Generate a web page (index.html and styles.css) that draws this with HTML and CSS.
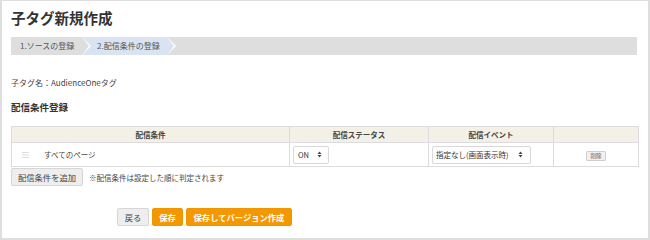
FILE: index.html
```html
<!DOCTYPE html>
<html lang="ja">
<head>
    <meta charset="UTF-8">
    <meta name="viewport" content="width=device-width, initial-scale=1.0">
    <title>子タグ新規作成</title>
    <link rel="stylesheet" href="styles.css">
</head>
<body>
    <div class="page">
        <h1 class="pageTitle">子タグ新規作成</h1>

        <div class="steps">
            <div class="step step1">1.ソースの登録</div>
            <div class="step step2 current">2.配信条件の登録</div>
        </div>

        <p class="tagName">子タグ名：AudienceOneタグ</p>
        <h2 class="sectionTitle">配信条件登録</h2>

        <table class="condTable">
            <colgroup>
                <col class="colCond">
                <col class="colStatus">
                <col class="colEvent">
                <col class="colDel">
            </colgroup>
            <thead>
                <tr>
                    <th>配信条件</th>
                    <th>配信ステータス</th>
                    <th>配信イベント</th>
                    <th></th>
                </tr>
            </thead>
            <tbody>
                <tr>
                    <td>
                        <div class="condCell">
                            <svg class="handle" width="7" height="6" viewBox="0 0 7 6">
                                <rect x="0" y="0" width="7" height="1" fill="#dcdcdc"/>
                                <rect x="0" y="2.5" width="7" height="1" fill="#dcdcdc"/>
                                <rect x="0" y="5" width="7" height="1" fill="#dcdcdc"/>
                            </svg>
                            <span>すべてのページ</span>
                        </div>
                    </td>
                    <td class="selCell">
                        <div class="select selOn">
                            <span>ON</span>
                            <svg class="arrows" width="5" height="7" viewBox="0 0 5 7">
                                <path d="M0.5 3 L2.5 0.5 L4.5 3 Z" fill="#444"/>
                                <path d="M0.5 4 L2.5 6.5 L4.5 4 Z" fill="#444"/>
                            </svg>
                        </div>
                    </td>
                    <td class="selCell">
                        <div class="select selEvent">
                            <span>指定なし(画面表示時)</span>
                            <svg class="arrows" width="5" height="7" viewBox="0 0 5 7">
                                <path d="M0.5 3 L2.5 0.5 L4.5 3 Z" fill="#444"/>
                                <path d="M0.5 4 L2.5 6.5 L4.5 4 Z" fill="#444"/>
                            </svg>
                        </div>
                    </td>
                    <td class="delCell">
                        <button class="btnDel">削除</button>
                    </td>
                </tr>
            </tbody>
        </table>

        <div class="addRow">
            <button class="btnGray btnAdd">配信条件を追加</button>
            <span class="note">※配信条件は設定した順に判定されます</span>
        </div>

        <div class="actions">
            <button class="btnGray btnBack">戻る</button>
            <button class="btnOrange btnSave">保存</button>
            <button class="btnOrange btnVersion">保存してバージョン作成</button>
        </div>
    </div>
</body>
</html>
```

FILE: styles.css
```css
* {
    box-sizing: border-box;
}

body {
    margin: 0;
    background-color: #fff;
    font-family: "Noto Sans CJK JP", "Noto Sans", sans-serif;
    color: #333;
}

.page {
    width: 650px;
    height: 240px;
    border: 2px solid #dedede;
    border-top-width: 1px;
    padding: 8px 11px 0 9px;
}

.pageTitle {
    margin: 0;
    font-size: 14.5px;
    line-height: 18px;
    font-weight: bold;
    color: #333;
}

/* ---------- steps ---------- */

.steps {
    display: flex;
    height: 18px;
    margin-top: 10px;
    background-color: #dedede;
}

.step {
    position: relative;
    height: 18px;
    line-height: 18px;
    font-size: 8px;
    color: #555;
    background-color: #dedede;
}

.step1 {
    width: 71px;
    padding-left: 9px;
}

.step2 {
    width: 85px;
    padding-left: 15px;
}

.step.current {
    background-color: #dae3f1;
}

.step::before,
.step::after {
    content: "";
    position: absolute;
    top: 0;
    width: 0;
    height: 0;
    border-top: 9px solid transparent;
    border-bottom: 9px solid transparent;
}

.step::before {
    right: -9px;
    border-left: 9px solid #fff;
    z-index: 1;
}

.step::after {
    right: -7px;
    border-left: 7px solid #dedede;
    z-index: 2;
}

.step.current::after {
    border-left-color: #dae3f1;
}

/* ---------- info ---------- */

.tagName {
    margin: 22px 0 0;
    font-size: 8px;
    line-height: 12px;
    color: #444;
}

.sectionTitle {
    margin: 12px 0 0;
    font-size: 9.5px;
    line-height: 12px;
    font-weight: bold;
    color: #333;
}

/* ---------- table ---------- */

.condTable {
    width: 627px;
    margin-top: 13px;
    border-collapse: collapse;
    table-layout: fixed;
    font-size: 7.5px;
}

.colCond { width: 278px; }
.colStatus { width: 139px; }
.colEvent { width: 125px; }
.colDel { width: 85px; }

.condTable th,
.condTable td {
    border: 1px solid #dcdcdc;
    padding: 0;
}

.condTable th {
    height: 16px;
    background-color: #f3f0e8;
    font-weight: bold;
    color: #444;
    text-align: center;
}

.condTable td {
    height: 24px;
    vertical-align: middle;
    color: #444;
}

.condCell {
    display: flex;
    align-items: center;
    gap: 15px;
    padding-left: 10px;
}

.condTable td.selCell {
    padding-left: 3px;
}

.select {
    display: flex;
    align-items: center;
    justify-content: space-between;
    height: 18px;
    border: 1px solid #d8d8d8;
    border-radius: 2px;
    background-color: #fff;
    font-size: 7.5px;
    color: #333;
}

.selOn {
    width: 36px;
    padding: 0 6px 0 4px;
}

.selEvent {
    width: 99px;
    padding: 0 7px 0 3px;
}

.delCell {
    text-align: center;
}

.btnDel {
    width: 20px;
    height: 10px;
    padding: 0;
    border: 1px solid #cfcfcf;
    border-radius: 1px;
    background-color: #f0f0f0;
    font-family: inherit;
    font-size: 5.5px;
    line-height: 8px;
    color: #555;
}

/* ---------- buttons ---------- */

button {
    font-family: "Noto Sans CJK JP", "Noto Sans", sans-serif;
    cursor: pointer;
}

.btnGray {
    height: 18px;
    padding: 0 6px;
    border: 1px solid #d6d6d6;
    border-radius: 2px;
    background-color: #eee;
    font-size: 8.3px;
    line-height: 16px;
    color: #444;
}

.addRow {
    display: flex;
    align-items: center;
    gap: 6px;
    margin-top: 1px;
}

.btnAdd {
    width: 72px;
    padding: 0;
}

.note {
    font-size: 7.5px;
    color: #444;
}

.actions {
    display: flex;
    gap: 3px;
    margin: 22px 0 0 106px;
}

.btnBack {
    width: 32px;
    padding: 0;
}

.btnOrange {
    height: 18px;
    padding: 0;
    border: 1px solid #f29600;
    border-radius: 2px;
    background-color: #f39800;
    font-size: 8.3px;
    font-weight: bold;
    line-height: 16px;
    color: #fff;
}

.btnSave {
    width: 31px;
}

.btnVersion {
    width: 106px;
}
```
